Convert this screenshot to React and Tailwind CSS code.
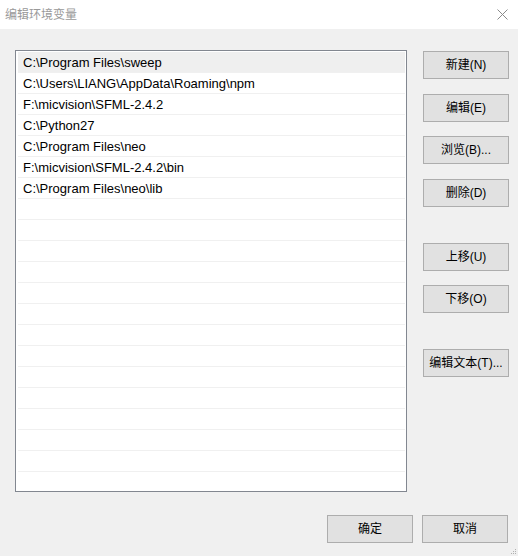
import React from "react";

const paths = [
  "C:\\Program Files\\sweep",
  "C:\\Users\\LIANG\\AppData\\Roaming\\npm",
  "F:\\micvision\\SFML-2.4.2",
  "C:\\Python27",
  "C:\\Program Files\\neo",
  "F:\\micvision\\SFML-2.4.2\\bin",
  "C:\\Program Files\\neo\\lib",
];

const font = { fontFamily: '"Liberation Sans", "Noto Sans CJK SC", sans-serif' };

const Btn = ({ children, className = "" }) => (
  <button
    className={`w-[86px] h-[28px] bg-[#e1e1e1] border border-[#adadad] text-[12px] text-black flex items-center justify-center leading-none ${className}`}
  >
    {children}
  </button>
);

export default function App() {
  const rows = [...paths, ...Array(14).fill("")];

  return (
    <div
      className="w-[518px] h-[556px] bg-[#f0f0f0] flex flex-col overflow-hidden relative"
      style={font}
    >
      {/* Title bar */}
      <div className="h-[29px] bg-white flex items-center justify-between pl-[5px] pr-[8px] shrink-0">
        <span className="text-[12px] text-[#999999]">编辑环境变量</span>
        <svg width="11" height="11" viewBox="0 0 11 11" className="mr-[2px]">
          <path d="M0.5 0.5L10.5 10.5M10.5 0.5L0.5 10.5" stroke="#8a8a8a" strokeWidth="1" />
        </svg>
      </div>

      {/* Body */}
      <div className="flex pl-[15px] pt-[21px]">
        {/* List */}
        <div className="w-[392px] h-[442px] bg-white border border-[#828790] overflow-hidden pt-[1px] px-[1px]">
          {rows.map((p, i) => (
            <div
              key={i}
              className={`h-[21px] border-b border-[#f0f0f0] flex items-center pl-[5px] pt-[1px] text-[13px] text-black ml-[1px] ${
                i === 0 ? "bg-[#efefef]" : ""
              }`}
            >
              {p}
            </div>
          ))}
        </div>

        {/* Side buttons */}
        <div className="flex flex-col ml-[16px] mt-[1px]">
          <Btn>新建(N)</Btn>
          <Btn className="mt-[15px]">编辑(E)</Btn>
          <Btn className="mt-[14px]">浏览(B)...</Btn>
          <Btn className="mt-[15px]">删除(D)</Btn>
          <Btn className="mt-[36px]">上移(U)</Btn>
          <Btn className="mt-[14px]">下移(O)</Btn>
          <Btn className="mt-[36px]">编辑文本(T)...</Btn>
        </div>
      </div>

      {/* Bottom buttons */}
      <div className="flex justify-end gap-[9px] pr-[10px] mt-[23px]">
        <Btn>确定</Btn>
        <Btn>取消</Btn>
      </div>

      {/* Resize grip */}
      <svg width="6" height="6" viewBox="0 0 6 6" className="absolute right-[1px] bottom-[1px]">
        <rect x="4" y="0" width="1" height="1" fill="#b0b0b0" />
        <rect x="2" y="2" width="1" height="1" fill="#b0b0b0" />
        <rect x="4" y="2" width="1" height="1" fill="#b0b0b0" />
        <rect x="0" y="4" width="1" height="1" fill="#b0b0b0" />
        <rect x="2" y="4" width="1" height="1" fill="#b0b0b0" />
        <rect x="4" y="4" width="1" height="1" fill="#b0b0b0" />
      </svg>
    </div>
  );
}
